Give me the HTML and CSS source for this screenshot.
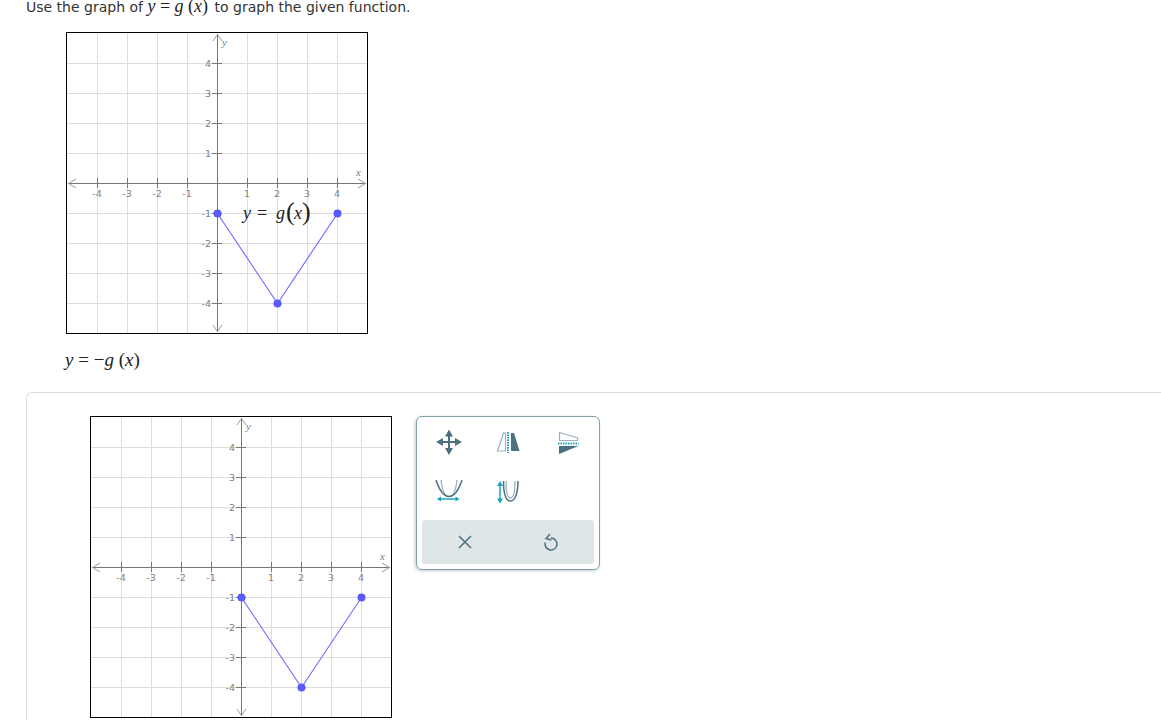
FILE: index.html
```html
<!DOCTYPE html>
<html lang="en">
<head>
  <meta charset="UTF-8" />
  <title>Graph transformation</title>
  <link rel="stylesheet" href="styles.css">
</head>
<body>
  <p class="prompt">Use the graph of <span class="math"><i>y</i> = <i>g</i> (<i>x</i>)</span> to graph the given function.</p>

  <svg class="graph graph-given" width="300" height="300" viewBox="0 0 300 300">
    <path class="grid" d="M30.5 0V300M60.5 0V300M90.5 0V300M120.5 0V300M180.5 0V300M210.5 0V300M240.5 0V300M270.5 0V300M0 30.5H300M0 60.5H300M0 90.5H300M0 120.5H300M0 180.5H300M0 210.5H300M0 240.5H300M0 270.5H300"/>
    <path class="axis" d="M1 150.5H299M150.5 1V299"/>
    <path class="ticks" d="M30.5 145V155M60.5 145V155M90.5 145V155M120.5 145V155M180.5 145V155M210.5 145V155M240.5 145V155M270.5 145V155M145 30.5H155M145 60.5H155M145 90.5H155M145 120.5H155M145 180.5H155M145 210.5H155M145 240.5H155M145 270.5H155"/>
    <path class="arrows" d="M9 146L1.5 150.5L9 155M291 146L298.5 150.5L291 155M146 8L150.5 1.5L155 8M146 292L150.5 298.5L155 292"/>
    <text class="axis-name" x="155" y="13">y</text>
    <text class="axis-name" x="289" y="143">x</text>
    <g class="x-labels">
      <text x="30" y="164">-4</text><text x="60" y="164">-3</text><text x="90" y="164">-2</text><text x="120" y="164">-1</text>
      <text x="180" y="164">1</text><text x="210" y="164">2</text><text x="240" y="164">3</text><text x="270" y="164">4</text>
    </g>
    <g class="y-labels">
      <text x="144" y="34">4</text><text x="144" y="64">3</text><text x="144" y="94">2</text><text x="144" y="124">1</text>
      <text x="144" y="184">-1</text><text x="144" y="214">-2</text><text x="144" y="244">-3</text><text x="144" y="274">-4</text>
    </g>
    <polyline class="curve" points="150.5,180.5 210.5,270.5 270.5,180.5"/>
    <circle class="dot" cx="150.5" cy="180.5" r="4"/>
    <circle class="dot" cx="210.5" cy="270.5" r="4"/>
    <circle class="dot" cx="270.5" cy="180.5" r="4"/>
    <text class="curve-label" y="186"><tspan class="it" x="176">y</tspan><tspan x="190">=</tspan><tspan class="it" x="209">g</tspan><tspan class="big" x="219" dy="1">(</tspan><tspan class="it" x="227" dy="-1">x</tspan><tspan class="big" x="235" dy="1">)</tspan></text>
  </svg>

  <p class="target"><span class="math"><i>y</i> = −<i>g</i> (<i>x</i>)</span></p>

  <section class="answer">
    <svg class="graph" width="300" height="300" viewBox="0 0 300 300">
      <path class="grid" d="M30.5 0V300M60.5 0V300M90.5 0V300M120.5 0V300M180.5 0V300M210.5 0V300M240.5 0V300M270.5 0V300M0 30.5H300M0 60.5H300M0 90.5H300M0 120.5H300M0 180.5H300M0 210.5H300M0 240.5H300M0 270.5H300"/>
      <path class="axis" d="M1 150.5H299M150.5 1V299"/>
      <path class="ticks" d="M30.5 145V155M60.5 145V155M90.5 145V155M120.5 145V155M180.5 145V155M210.5 145V155M240.5 145V155M270.5 145V155M145 30.5H155M145 60.5H155M145 90.5H155M145 120.5H155M145 180.5H155M145 210.5H155M145 240.5H155M145 270.5H155"/>
      <path class="arrows" d="M9 146L1.5 150.5L9 155M291 146L298.5 150.5L291 155M146 8L150.5 1.5L155 8M146 292L150.5 298.5L155 292"/>
      <text class="axis-name" x="155" y="13">y</text>
      <text class="axis-name" x="289" y="143">x</text>
      <g class="x-labels">
        <text x="30" y="164">-4</text><text x="60" y="164">-3</text><text x="90" y="164">-2</text><text x="120" y="164">-1</text>
        <text x="180" y="164">1</text><text x="210" y="164">2</text><text x="240" y="164">3</text><text x="270" y="164">4</text>
      </g>
      <g class="y-labels">
        <text x="144" y="34">4</text><text x="144" y="64">3</text><text x="144" y="94">2</text><text x="144" y="124">1</text>
        <text x="144" y="184">-1</text><text x="144" y="214">-2</text><text x="144" y="244">-3</text><text x="144" y="274">-4</text>
      </g>
      <polyline class="curve" points="150.5,180.5 210.5,270.5 270.5,180.5"/>
      <circle class="dot" cx="150.5" cy="180.5" r="4"/>
      <circle class="dot" cx="210.5" cy="270.5" r="4"/>
      <circle class="dot" cx="270.5" cy="180.5" r="4"/>
    </svg>

    <div class="tools">
      <div class="tool-grid">
        <svg class="icon" width="30" height="30" viewBox="0 0 30 30">
          <path class="shaft" d="M15 7V23M7 15H23"/>
          <path class="solid" d="M15 2.500L19 9.500H11ZM15 28L11 21H19ZM2 15L9 11V19ZM28 15L21 19V11Z"/>
        </svg>
        <svg class="icon" width="30" height="30" viewBox="0 0 30 30">
          <path class="outline" d="M9.500 6H11.500V24H3.500Z"/>
          <path class="solid" d="M17 6H20L25.500 24H17Z"/>
          <path class="dots" d="M14 5V26"/>
        </svg>
        <svg class="icon" width="30" height="30" viewBox="0 0 30 30">
          <path class="outline" d="M5.500 5.500L23.500 11V13.500H5.500Z"/>
          <path class="dots" d="M4 16.500H24.500"/>
          <path class="solid" d="M5 19H24.500L5 27Z"/>
        </svg>
        <svg class="icon" width="30" height="30" viewBox="0 0 30 30">
          <path class="curve-soft" d="M7 3C8 12 10.500 19.500 15 19.500C19.500 19.500 22 12 23 3"/>
          <path class="curve-dark" d="M2 3C5 12 9 19.500 15 19.500C21 19.500 25 12 28 3"/>
          <path class="teal-line" d="M5 22H23"/>
          <path class="teal" d="M3 22L7 19.500V24.500ZM25.500 22L21.500 24.500V19.500Z"/>
        </svg>
        <svg class="icon" width="30" height="30" viewBox="0 0 30 30">
          <path class="curve-soft" d="M12 4C12 14 13 21 16.500 21C20 21 21 14 21 4"/>
          <path class="curve-dark" d="M9.500 4C9.500 15 11.500 24 16.500 24C21.500 24 24 15 24 4"/>
          <path class="teal-line" d="M6 7V23"/>
          <path class="teal" d="M6 4L9 9H3ZM6 26.500L3 21.500H9Z"/>
        </svg>
      </div>
      <div class="tool-actions">
        <svg class="icon" width="30" height="30" viewBox="0 0 30 30">
          <path class="thin-dark" d="M9 9L21 21M21 9L9 21"/>
        </svg>
        <svg class="icon" width="30" height="30" viewBox="0 0 30 30">
          <path class="thin-dark" d="M15 11A6 6 0 1 1 9.200 15.500"/>
          <path class="thin-dark" d="M14 7L10 11.500L15.500 13"/>
        </svg>
      </div>
    </div>
  </section>
</body>
</html>
```

FILE: styles.css
```css
body {
  margin: 0;
  padding-left: 26px;
  overflow: hidden;
  font-family: "DejaVu Sans", Verdana, sans-serif;
  background-color: white;
  color: #333;
}
p {
  margin: 0;
}
.prompt {
  height: 15px;
  margin-top: -1px;
  font-size: 14px;
  line-height: 14px;
}
.math {
  display: inline-block;
  margin-right: 2px;
  font-family: "Liberation Serif", serif;
  font-size: 18px;
  line-height: 14px;
  color: #222;
}
.graph {
  display: block;
  flex: none;
  border: 1px solid black;
  background-color: white;
}
.graph-given {
  margin: 18px 0 0 40px;
}
.target {
  height: 24px;
  margin: 14px 0 20px 39px;
  line-height: 24px;
}
.target .math {
  font-size: 19px;
  line-height: 24px;
}
.answer {
  display: flex;
  align-items: flex-start;
  gap: 24px;
  margin-right: -10px;
  padding: 23px 0 40px 63px;
  border: 1px solid #d6e0e0;
  border-radius: 6px;
}
/* graph parts */
.grid {
  fill: none;
  stroke: #ddd;
}
.axis {
  fill: none;
  stroke: #777;
}
.ticks {
  fill: none;
  stroke: #777;
}
.arrows {
  fill: none;
  stroke: #999;
}
.axis-name {
  font-family: "Liberation Serif", serif;
  font-style: italic;
  font-size: 11px;
  fill: #777;
}
.x-labels text, .y-labels text {
  font-family: "DejaVu Sans", sans-serif;
  font-size: 9.5px;
  fill: #808080;
}
.x-labels text {
  text-anchor: middle;
}
.y-labels text {
  text-anchor: end;
}
.curve {
  fill: none;
  stroke: #7474ff;
  stroke-width: 1.2;
}
.dot {
  fill: #5a5aff;
}
.curve-label {
  font-family: "Liberation Serif", serif;
  font-size: 18px;
  fill: #222;
}
.curve-label .it {
  font-style: italic;
}
.curve-label .big {
  font-size: 26px;
}
/* tool panel */
.tools {
  width: 182px;
  height: 152px;
  border: 1px solid #80a0a6;
  border-radius: 6px;
  box-shadow: -1px 1px 3px rgba(90, 130, 140, 0.4);
}
.tool-grid {
  display: grid;
  grid-template-columns: repeat(3, 60px);
  grid-auto-rows: 50px;
  justify-items: center;
  align-items: center;
  height: 103px;
  padding-left: 2px;
}
.tool-actions {
  display: flex;
  justify-content: space-around;
  align-items: center;
  height: 44px;
  margin: 0 5px;
  border-radius: 3px;
  background-color: #dfe6e8;
}
.icon {
  display: block;
  fill: none;
}
.solid {
  fill: #4b7080;
}
.shaft {
  stroke: #4b7080;
  stroke-width: 2;
}
.outline {
  fill: white;
  stroke: #9db2ba;
  stroke-width: 1.2;
}
.dots {
  stroke: #1ca3bb;
  stroke-width: 2;
  stroke-dasharray: 1.500 1;
}
.thin-dark {
  stroke: #4b7080;
  stroke-width: 1.5;
  fill: none;
}
.curve-dark {
  stroke: #4b7080;
  stroke-width: 1.5;
}
.curve-soft {
  stroke: #9db2ba;
  stroke-width: 1.3;
}
.teal-line {
  stroke: #1ca3bb;
  stroke-width: 1.5;
}
.teal {
  fill: #1ca3bb;
}
```
